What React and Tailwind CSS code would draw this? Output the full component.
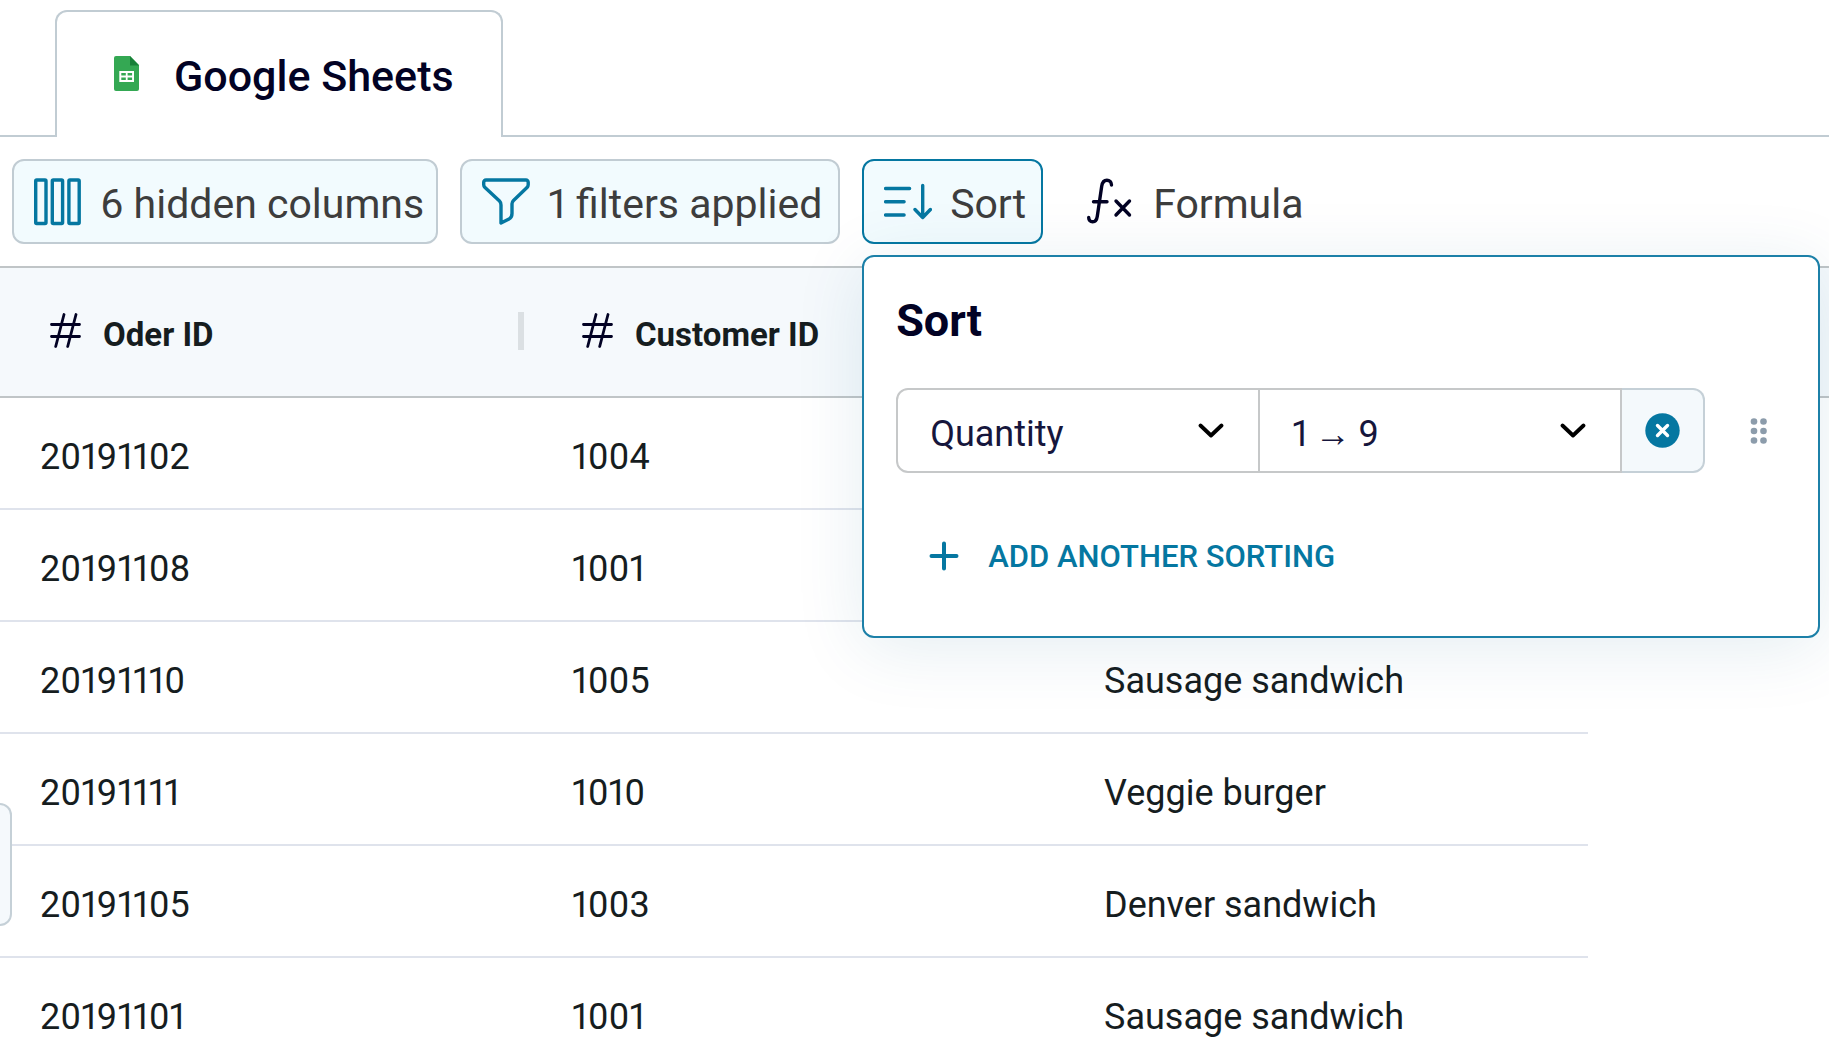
import { useState } from 'react';

const COLUMNS = ['Oder ID', 'Customer ID', ''];

const ROWS = [
  { orderId: '20191102', customerId: '1004', item: '' },
  { orderId: '20191108', customerId: '1001', item: '' },
  { orderId: '20191110', customerId: '1005', item: 'Sausage sandwich' },
  { orderId: '20191111', customerId: '1010', item: 'Veggie burger' },
  { orderId: '20191105', customerId: '1003', item: 'Denver sandwich' },
  { orderId: '20191101', customerId: '1001', item: 'Sausage sandwich' },
];

function SheetsIcon() {
  return (
    <svg width="26" height="36" viewBox="0 0 26 36" aria-hidden="true">
      <path d="M2 0h14L25 9v24a2 2 0 0 1-2 2H2a2 2 0 0 1-2-2V2a2 2 0 0 1 2-2z" fill="#34a853" />
      <path d="M16 0 25 9.500h-9z" fill="#188038" />
      <path d="M5.300 15h14.700v11h-14.700z" fill="#fff" />
      <path d="M7.300 17h4.500v2.500H7.300zM13.600 17h4.500v2.500h-4.500zM7.300 21.500h4.500V24H7.300zM13.600 21.500h4.500V24h-4.500z" fill="#34a853" />
    </svg>
  );
}

function ColumnsIcon() {
  return (
    <svg width="48" height="48" viewBox="0 0 48 48" fill="none" stroke="#0577a1" strokeWidth="3.400" aria-hidden="true">
      <rect x="1.700" y="2" width="10.300" height="43.500" rx="1" />
      <rect x="18.300" y="2" width="10.300" height="43.500" rx="1" />
      <rect x="34.900" y="2" width="10.300" height="43.500" rx="1" />
    </svg>
  );
}

function FilterIcon() {
  return (
    <svg width="48" height="48" viewBox="0 0 48 48" fill="none" stroke="#0577a1" strokeWidth="3.400" strokeLinejoin="round" aria-hidden="true">
      <path d="M4 2h40a2.200 2.200 0 0 1 2.200 2.200v2.600c0 1.200-.5 2-1.200 2.800L31.500 22.500c-1 1-1.500 2-1.500 3.200v9.800c0 3.500-1 4.500-3 5.500l-8 4V27c0-1.800-.5-3-1.500-4L3 9.600C2.200 8.800 1.700 8 1.700 6.800V4.200C1.700 3 2.600 2 4 2z" />
    </svg>
  );
}

function SortIcon() {
  return (
    <svg width="48" height="48" viewBox="0 0 48 48" fill="none" stroke="#0577a1" strokeWidth="3.400" strokeLinecap="round" strokeLinejoin="round" aria-hidden="true">
      <path d="M1.600 10.500h24M1.600 23.700h18.500M1.600 37h18.500M38.700 7.500v32M31 31.500l7.700 8 7.700-8" />
    </svg>
  );
}

function FormulaIcon() {
  return (
    <svg width="48" height="48" viewBox="0 0 48 48" fill="none" stroke="#020224" strokeWidth="3.400" strokeLinecap="round" strokeLinejoin="round" aria-hidden="true">
      <path d="M24.500 7c0-3-2-4.800-4.600-4.800-3 0-4.600 2.300-5.200 6l-4.400 30c-.5 3.400-1.800 5.600-4.600 5.600C3.200 43.800 1.700 42 1.700 39.500M6.500 23.700h13.500M29 23l13.500 14M42.500 23L29 37" />
    </svg>
  );
}

function NumberIcon() {
  return (
    <svg width="32" height="36" viewBox="0 0 32 36" fill="none" stroke="#020224" strokeWidth="2.800" strokeLinecap="round" aria-hidden="true">
      <path d="M14 1.500L5.700 33.500M26 1.500L17.700 33.500M1.500 11.500h28M1.500 23.500h28" />
    </svg>
  );
}

function Chevron() {
  return (
    <svg className="pointer-events-none absolute right-9 top-[35px] h-4 w-6.5" viewBox="0 0 26 16" fill="none" stroke="#000" strokeWidth="3.800" strokeLinecap="round" strokeLinejoin="round" aria-hidden="true">
      <path d="M2.500 2.500L13 12.500 23.500 2.500" />
    </svg>
  );
}

function ToolbarButton({ icon, label, className, ...props }) {
  return (
    <button className={`flex h-[85px] items-center gap-[18px] rounded-xl border-2 pl-5 pr-3 text-[41px] text-[#3d3d3d] ${className}`} {...props}>
      {icon}
      <span className="whitespace-nowrap pt-1.5">{label}</span>
    </button>
  );
}

function SortPanel() {
  const [field, setField] = useState('Quantity');
  const [order, setOrder] = useState('asc');

  return (
    <section aria-label="Sort" className="absolute left-0 top-24 z-10 w-[958px] rounded-xl border-2 border-[#1c80a8] bg-white px-8 pb-[38px] pt-9 shadow-[0_10px_70px_rgba(5,90,130,0.11)]">
      <h2 className="text-[45px] leading-[56px] font-bold text-[#020224]">Sort</h2>
      <div className="mt-[39px] flex items-center">
        <div className="relative w-[364px]">
          <select
            aria-label="Sort field"
            value={field}
            onChange={(e) => setField(e.target.value)}
            className="h-[85px] w-full appearance-none rounded-l-xl border-2 border-[#c6c8c9] bg-white pl-8 pt-1.5 text-[36px] text-[#16163c]"
          >
            <option>Quantity</option>
            <option>Oder ID</option>
            <option>Customer ID</option>
          </select>
          <Chevron />
        </div>
        <div className="relative w-[362px]">
          <select
            aria-label="Sort order"
            value={order}
            onChange={(e) => setOrder(e.target.value)}
            className="h-[85px] w-full appearance-none border-y-2 border-r-2 border-[#c6c8c9] bg-white pl-8 pt-1.5 text-[36px] text-[#16163c]"
          >
            <option value="asc">1{'\u2009'}→{'\u2009'}9</option>
            <option value="desc">9{'\u2009'}→{'\u2009'}1</option>
          </select>
          <Chevron />
        </div>
        <button aria-label="Remove sorting" className="flex h-[85px] w-[83px] items-center justify-center rounded-r-xl border-y-2 border-r-2 border-[#c5d0d7] bg-[#f4f9fc]">
          <svg width="35" height="35" viewBox="0 0 35 35" aria-hidden="true">
            <circle cx="17.500" cy="17.500" r="17.200" fill="#0577a1" />
            <path d="M12.500 12.500l10 10M22.500 12.500l-10 10" stroke="#fff" strokeWidth="3.400" strokeLinecap="round" />
          </svg>
        </button>
        <button aria-label="Reorder sorting" className="ml-11">
          <svg width="20" height="28" viewBox="0 0 20 28" fill="#8c9cab" aria-hidden="true">
            <circle cx="5" cy="4.500" r="3.300" />
            <circle cx="14.500" cy="4.500" r="3.300" />
            <circle cx="5" cy="14" r="3.300" />
            <circle cx="14.500" cy="14" r="3.300" />
            <circle cx="5" cy="23.500" r="3.300" />
            <circle cx="14.500" cy="23.500" r="3.300" />
          </svg>
        </button>
      </div>
      <button className="mt-10 flex h-[85px] items-center gap-7 pl-8 text-[31px] font-medium text-[#0577a1]">
        <svg width="32" height="32" viewBox="0 0 32 32" stroke="currentColor" strokeWidth="4" strokeLinecap="round" aria-hidden="true">
          <path d="M16 3.500v25M3.500 16h25" />
        </svg>
        <span className="pt-1">ADD ANOTHER SORTING</span>
      </button>
    </section>
  );
}

export default function App() {
  const [sortOpen, setSortOpen] = useState(true);

  return (
    <div className="relative h-screen overflow-hidden bg-white font-['Roboto',sans-serif] text-[#161d1f] proportional-nums">
      <nav className="flex border-b-2 border-[#c1ccd3] px-[55px] pt-2.5">
        <button className="-mb-0.5 flex h-[127px] w-[448px] items-center gap-[34px] rounded-t-xl border-x-2 border-t-2 border-[#c1ccd3] bg-white pb-0.5 pl-[57px] text-[43px] font-medium text-[#020224]">
          <SheetsIcon />
          <span className="pt-1.5">Google Sheets</span>
        </button>
      </nav>

      <div className="flex gap-[22px] px-3 pb-[22px] pt-[22px]">
        <ToolbarButton icon={<ColumnsIcon />} label="6 hidden columns" className="border-[#c1ccd3] bg-[#f2fbfe]" />
        <ToolbarButton icon={<FilterIcon />} label="1 filters applied" className="min-w-[380px] border-[#c1ccd3] bg-[#f2fbfe]" />
        <div className="relative">
          <ToolbarButton
            icon={<SortIcon />}
            label="Sort"
            className="min-w-[181px] border-[#0577a1] bg-[#f2fbfe]"
            aria-expanded={sortOpen}
            onClick={() => setSortOpen(!sortOpen)}
          />
          {sortOpen && <SortPanel />}
        </div>
        <ToolbarButton icon={<FormulaIcon />} label="Formula" className="border-transparent" />
      </div>

      <table className="w-full table-fixed border-separate border-spacing-0 text-left">
        <colgroup>
          <col className="w-[532px]" />
          <col className="w-[532px]" />
          <col className="w-[524px]" />
          <col />
        </colgroup>
        <thead>
          <tr>
            {COLUMNS.map((name, i) => (
              <th key={i} className="h-[132px] border-y-2 border-[#c0c5c7] bg-[#f5f9fc] p-0 pb-0.5">
                {name && (
                  <div className="flex items-center gap-[21px] pl-[50px] pr-2 text-[33px] font-bold">
                    <NumberIcon />
                    <span className="grow pt-2">{name}</span>
                    <span className="h-[38px] w-1.5 bg-[#dbe0e3]" />
                  </div>
                )}
              </th>
            ))}
            <td className="border-y-2 border-[#c0c5c7] bg-[#f5f9fc]" />
          </tr>
        </thead>
        <tbody className="text-[36px]">
          {ROWS.map((row) => (
            <tr key={row.orderId}>
              <td className="h-[112px] border-b-2 border-[#dfe3ec] pl-10 pt-2">{row.orderId}</td>
              <td className="border-b-2 border-[#dfe3ec] pl-10 pt-2">{row.customerId}</td>
              <td className="border-b-2 border-[#dfe3ec] pl-10 pt-2">{row.item}</td>
              <td />
            </tr>
          ))}
        </tbody>
      </table>

      <button aria-label="Open side panel" className="absolute left-0 top-[803px] h-[123px] w-3 rounded-r-xl border-y-2 border-r-2 border-[#c5d0d7] bg-[#f5f9fc]" />
    </div>
  );
}
